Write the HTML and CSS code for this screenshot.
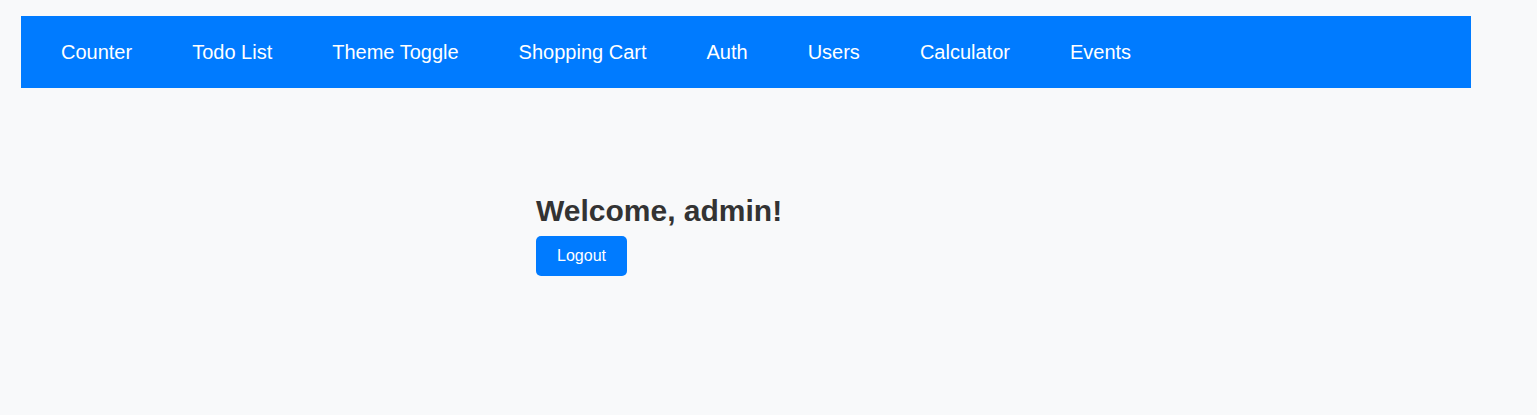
FILE: index.html
```html
<!DOCTYPE html>
<html lang="en">
<head>
<meta charset="utf-8">
<title>App</title>
<link rel="stylesheet" href="styles.css">
</head>
<body>
<div class="app">
  <nav class="navbar">
    <a class="nav-link" href="#">Counter</a>
    <a class="nav-link" href="#">Todo List</a>
    <a class="nav-link" href="#">Theme Toggle</a>
    <a class="nav-link" href="#">Shopping Cart</a>
    <a class="nav-link" href="#">Auth</a>
    <a class="nav-link" href="#">Users</a>
    <a class="nav-link" href="#">Calculator</a>
    <a class="nav-link" href="#">Events</a>
  </nav>
  <main class="content">
    <section class="auth">
      <h2 class="welcome">Welcome, admin!</h2>
      <button class="btn" type="button">Logout</button>
    </section>
  </main>
</div>
</body>
</html>
```
FILE: styles.css
```css
html, body {
  margin: 0;
  padding: 0;
  background: #f8f9fa;
  font-family: "Liberation Sans", Arial, sans-serif;
  color: #333;
}
.app {
  width: 1450px;
  margin: 0;
  padding: 16px 0 0 21px;
}
.navbar {
  display: flex;
  align-items: center;
  gap: 20px;
  height: 72px;
  padding: 0 20px;
  background: #007bff;
  box-sizing: border-box;
}
.nav-link {
  color: #fff;
  text-decoration: none;
  font-size: 20px;
  padding: 10px 20px;
}
.content {
  padding-top: 106px;
}
.auth {
  width: 420px;
  margin: 0 auto;
}
.welcome {
  font-size: 30px;
  font-weight: bold;
  margin: 0 0 8px;
  color: #333;
}
.btn {
  width: 91px;
  height: 40px;
  padding: 0;
  font-family: "Liberation Sans", Arial, sans-serif;
  font-size: 16px;
  color: #fff;
  background: #007bff;
  border: none;
  border-radius: 5px;
  cursor: pointer;
}
```
